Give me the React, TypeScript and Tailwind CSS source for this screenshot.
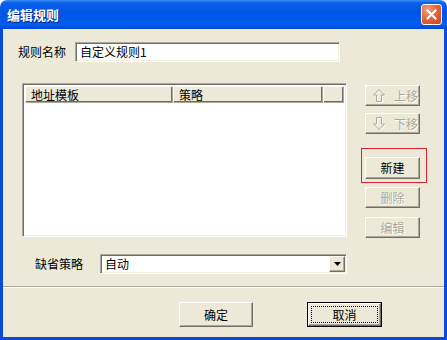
import React from "react";

const font = "font-['SimSun','Noto_Sans_CJK_SC',sans-serif]";

// classic raised 3D button
const Btn = ({
  children,
  disabled = false,
  className = "",
}: {
  children: React.ReactNode;
  disabled?: boolean;
  className?: string;
}) => (
  <div
    className={`flex items-center justify-center border border-t-white border-l-white border-r-[#716F64] border-b-[#716F64] bg-[#ECE9D8] shadow-[inset_-1px_-1px_0_#ACA899] text-[12px] ${
      disabled ? "text-[#ACA899] [text-shadow:1px_1px_0_#fff]" : "text-black"
    } ${className}`}>
    {children}
  </div>
);

const Arrow = ({ down = false }: { down?: boolean }) => {
  const pts = down
    ? "3.5,0.5 8.5,0.5 8.5,7 11.5,7 6,12.5 0.5,7 3.5,7"
    : "6,0.5 11.5,6 8.5,6 8.5,12.5 3.5,12.5 3.5,6 0.5,6";
  return (
    <svg width="13" height="14" viewBox="0 0 13 14">
      <polygon points={pts} transform="translate(1,1)" fill="none" stroke="#FFFFFF" />
      <polygon points={pts} fill="none" stroke="#ACA899" />
    </svg>
  );
};

const Sunken = ({
  children,
  className = "",
}: {
  children?: React.ReactNode;
  className?: string;
}) => (
  <div
    className={`border border-t-[#ACA899] border-l-[#ACA899] border-r-white border-b-white shadow-[inset_1px_1px_0_#716F64,inset_-1px_-1px_0_#F1EFE2] bg-white ${className}`}>
    {children}
  </div>
);

const HeaderCell = ({ label, w }: { label: string; w: string }) => (
  <div
    className={`${w} h-full flex items-center pl-[5px] border border-t-white border-l-white border-r-[#ACA899] border-b-[#ACA899] shadow-[inset_-1px_-1px_0_#716F64] bg-[#ECE9D8] text-black`}>
    {label}
  </div>
);

export default function App() {
  return (
    <div className={`w-[447px] h-[340px] flex flex-col ${font} text-[12px] leading-none`}>
      {/* title bar */}
      <div className="h-[29px] rounded-t-[7px] flex items-center justify-between pl-[7px] pr-[5px] bg-[linear-gradient(to_bottom,#3C8EF6_0%,#0A5FEC_10%,#0055E5_45%,#005DEE_85%,#0046D4_100%)]">
        <span className="text-white font-bold text-[13px] font-['Noto_Sans_CJK_SC',sans-serif] [text-shadow:1px_1px_0_#0A1E7A]">
          编辑规则
        </span>
        <div className="w-[21px] h-[21px] rounded-[3px] border border-white bg-[radial-gradient(circle_at_30%_25%,#F2A083_0%,#E2673F_45%,#C8431E_100%)] flex items-center justify-center">
          <svg width="11" height="11" viewBox="0 0 11 11">
            <path d="M1.5 1.5 L9.5 9.5 M9.5 1.5 L1.5 9.5" stroke="#fff" strokeWidth="2" strokeLinecap="square" />
          </svg>
        </div>
      </div>

      {/* frame */}
      <div className="flex-1 bg-[#0A4AD8] px-[3px] pb-[3px] flex flex-col">
        <div className="flex-1 bg-[#ECE9D8] flex flex-col">
          {/* name row */}
          <div className="mt-[13px] flex items-center pl-[15px]">
            <span className="w-[57px]">规则名称</span>
            <Sunken className="w-[265px] h-[20px] flex items-center pl-[4px]">自定义规则1</Sunken>
          </div>

          {/* list + side buttons */}
          <div className="mt-[21px] flex">
            <Sunken className="ml-[19px] w-[325px] h-[154px] p-[2px] flex flex-col">
              <div className="h-[17px] flex">
                <HeaderCell label="地址模板" w="w-[148px]" />
                <HeaderCell label="策略" w="w-[150px]" />
                <HeaderCell label="" w="flex-1" />
              </div>
            </Sunken>

            <div className="ml-[18px] pt-[2px] w-[55px] flex flex-col">
              <Btn disabled className="h-[21px] justify-start pl-[7px] gap-[8px]">
                <Arrow />
                <span>上移</span>
              </Btn>
              <Btn disabled className="mt-[7px] h-[21px] justify-start pl-[7px] gap-[8px]">
                <Arrow down />
                <span>下移</span>
              </Btn>
              <div className="relative mt-[23px]">
                <Btn className="h-[22px]">新建</Btn>
                <div className="absolute -left-[4px] -top-[9px] -right-[7px] -bottom-[4px] border border-[#D9262E]" />
              </div>
              <Btn disabled className="mt-[8px] h-[21px]">删除</Btn>
              <Btn disabled className="mt-[9px] h-[21px]">编辑</Btn>
            </div>
          </div>

          {/* default policy */}
          <div className="mt-[16px] flex items-center pl-[32px]">
            <span className="w-[65px]">缺省策略</span>
            <Sunken className="w-[247px] h-[20px] flex items-center justify-between pl-[4px] pr-[1px]">
              <span>自动</span>
              <div className="w-[16px] h-[16px] flex items-center justify-center border border-t-white border-l-white border-r-[#716F64] border-b-[#716F64] shadow-[inset_-1px_-1px_0_#ACA899] bg-[#ECE9D8]">
                <svg width="7" height="4" viewBox="0 0 7 4">
                  <polygon points="0,0 7,0 3.5,4" fill="#000" />
                </svg>
              </div>
            </Sunken>
          </div>

          {/* separator */}
          <div className="mt-[12px] h-[2px] border-t border-t-[#ACA899] border-b border-b-white" />

          {/* bottom buttons */}
          <div className="mt-[14px] flex pl-[176px] gap-[54px]">
            <Btn className="w-[74px] h-[25px]">确定</Btn>
            <div className="relative w-[75px] h-[25px] border border-black">
              <Btn className="w-full h-full">取消</Btn>
              <div className="absolute inset-[3px] border border-dotted border-black" />
            </div>
          </div>
        </div>
      </div>
    </div>
  );
}
